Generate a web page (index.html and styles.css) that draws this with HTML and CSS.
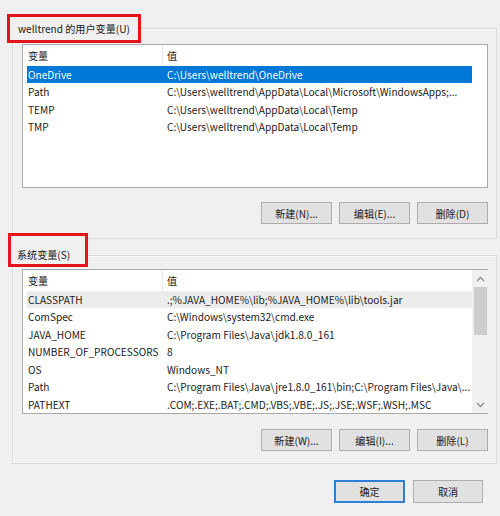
FILE: index.html
```html
<!DOCTYPE html>
<html lang="zh-CN">
<head>
<meta charset="utf-8">
<title>环境变量</title>
<link rel="stylesheet" href="styles.css">
</head>
<body>
<div class="window">
  <section class="group group-user">
    <div class="caption cap-user"><span>welltrend 的用户变量(U)</span></div>
    <div class="list list-user">
      <div class="rows">
        <div class="list-head"><div class="c1">变量</div><div class="c2">值</div></div>
        <div class="row sel"><div class="c1">OneDrive</div><div class="c2">C:\Users\welltrend\OneDrive</div></div>
        <div class="row"><div class="c1">Path</div><div class="c2">C:\Users\welltrend\AppData\Local\Microsoft\WindowsApps;...</div></div>
        <div class="row"><div class="c1">TEMP</div><div class="c2">C:\Users\welltrend\AppData\Local\Temp</div></div>
        <div class="row"><div class="c1">TMP</div><div class="c2">C:\Users\welltrend\AppData\Local\Temp</div></div>
      </div>
    </div>
    <div class="btns">
      <button class="btn">新建(N)...</button>
      <button class="btn">编辑(E)...</button>
      <button class="btn">删除(D)</button>
    </div>
  </section>

  <section class="group group-sys">
    <div class="caption cap-sys"><span>系统变量(S)</span></div>
    <div class="list list-sys">
      <div class="rows">
        <div class="list-head"><div class="c1">变量</div><div class="c2">值</div></div>
        <div class="row hl"><div class="c1">CLASSPATH</div><div class="c2">.;%JAVA_HOME%\lib;%JAVA_HOME%\lib\tools.jar</div></div>
        <div class="row"><div class="c1">ComSpec</div><div class="c2">C:\Windows\system32\cmd.exe</div></div>
        <div class="row"><div class="c1">JAVA_HOME</div><div class="c2">C:\Program Files\Java\jdk1.8.0_161</div></div>
        <div class="row"><div class="c1">NUMBER_OF_PROCESSORS</div><div class="c2">8</div></div>
        <div class="row"><div class="c1">OS</div><div class="c2">Windows_NT</div></div>
        <div class="row"><div class="c1">Path</div><div class="c2">C:\Program Files\Java\jre1.8.0_161\bin;C:\Program Files\Java\...</div></div>
        <div class="row"><div class="c1">PATHEXT</div><div class="c2">.COM;.EXE;.BAT;.CMD;.VBS;.VBE;.JS;.JSE;.WSF;.WSH;.MSC</div></div>
      </div>
      <div class="scrollbar">
        <div class="arrow">
          <svg width="9" height="6" viewBox="0 0 9 6"><path d="M1 5 L4.5 1.5 L8 5" fill="none" stroke="#8a8a8a" stroke-width="1.3"/></svg>
        </div>
        <div class="thumb"></div>
        <div class="track"></div>
        <div class="arrow">
          <svg width="9" height="6" viewBox="0 0 9 6"><path d="M1 1 L4.5 4.5 L8 1" fill="none" stroke="#8a8a8a" stroke-width="1.3"/></svg>
        </div>
      </div>
    </div>
    <div class="btns">
      <button class="btn">新建(W)...</button>
      <button class="btn">编辑(I)...</button>
      <button class="btn">删除(L)</button>
    </div>
  </section>

  <div class="footer">
    <button class="btn primary">确定</button>
    <button class="btn">取消</button>
  </div>
</div>
</body>
</html>
```

FILE: styles.css
```css
* { box-sizing: border-box; }

html, body {
  margin: 0;
  padding: 0;
  background: #f0f0f0;
}

body {
  width: 500px;
  height: 516px;
  overflow: hidden;
  font-family: "Noto Sans CJK SC", "Noto Sans", sans-serif;
  font-size: 10.1px;
  color: #1a1a1a;
}

.window {
  display: flex;
  flex-direction: column;
  padding: 28px 0 0 12px;
  height: 516px;
}

.group {
  position: relative;
  width: 485px;
  border: 1px solid #d9d9d9;
  box-shadow: inset 1px 1px 0 #fafafa;
  display: flex;
  flex-direction: column;
  padding-left: 9px;
}

.group-user {
  height: 211px;
  padding-top: 15px;
}

.group-sys {
  margin-top: 16px;
  height: 209px;
  padding-top: 13px;
}

.caption {
  position: absolute;
  z-index: 2;
  border: 3px solid #e3141c;
  background: #f0f0f0;
  display: flex;
  align-items: center;
  white-space: nowrap;
}

.cap-user {
  left: -6px;
  top: -15px;
  width: 134px;
  height: 29px;
  padding-left: 8px;
}

.cap-sys {
  left: -5px;
  top: -23px;
  width: 80px;
  height: 34px;
  padding: 8px 0 0 6px;
}

.list {
  width: 466px;
  background: #fff;
  border: 1px solid #a9a9a9;
  display: flex;
}

.list-user { height: 144px; }
.list-sys  { height: 145px; }

.rows {
  flex: 1;
  display: flex;
  flex-direction: column;
  padding-left: 4px;
}

.list-head {
  display: flex;
  height: 20.5px;
  align-items: center;
  width: 445px;
}

.list-head .c1 {
  border-right: 1px solid #e8e8e8;
  height: 100%;
  display: flex;
  align-items: center;
}

.row {
  display: flex;
  align-items: center;
  height: 17.5px;
  width: 445px;
  white-space: nowrap;
}

.c1 {
  width: 136px;
  padding-left: 1px;
  flex: none;
}

.c2 {
  padding-left: 4px;
  overflow: hidden;
}

.row.sel {
  background: #0078d7;
  color: #fff;
}

.row.hl {
  background: #ececec;
}

.scrollbar {
  width: 17px;
  flex: none;
  background: #f0f0f0;
  display: flex;
  flex-direction: column;
}

.arrow {
  height: 17px;
  display: flex;
  align-items: center;
  justify-content: center;
}

.thumb {
  height: 48px;
  margin: 0 2px;
  background: #cdcdcd;
}

.track { flex: 1; }

.btns {
  display: flex;
  justify-content: flex-end;
  gap: 7px;
  width: 466px;
}

.group-user .btns { margin-top: 14px; }
.group-sys .btns { margin-top: 15px; }

.btn {
  width: 71px;
  height: 22px;
  border: 1px solid #adadad;
  background: #e1e1e1;
  font-family: "Noto Sans CJK SC", "Noto Sans", sans-serif;
  font-size: 10.1px;
  color: #1a1a1a;
  padding: 0;
  margin: 0;
}

.footer {
  display: flex;
  gap: 8px;
  justify-content: flex-end;
  width: 471px;
  margin-top: 16px;
}

.footer .btn {
  height: 23px;
}

.footer .btn + .btn { width: 70px; }

.btn.primary {
  border: 2px solid #2b7fd4;
}
```
